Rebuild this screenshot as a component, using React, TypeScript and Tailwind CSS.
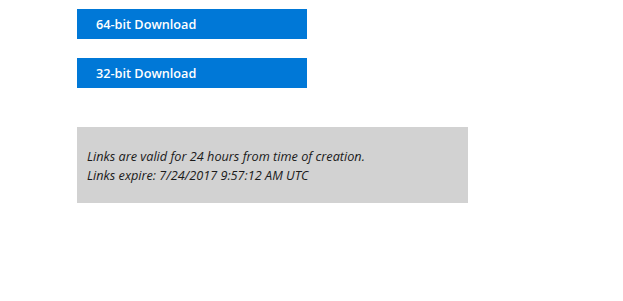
export default function App() {
  return (
    <div className="min-h-[301px] bg-white pl-[77px] pt-[9px] font-['Open_Sans',sans-serif]">
      <div className="flex flex-col gap-[19px]">
        <a className="flex h-[30px] w-[230px] items-center bg-[#0078d7] pl-[19px] pt-[2px] text-[12.7px] font-semibold text-white">
          64-bit Download
        </a>
        <a className="flex h-[30px] w-[230px] items-center bg-[#0078d7] pl-[19px] pt-[2px] text-[12.7px] font-semibold text-white">
          32-bit Download
        </a>
      </div>
      <div className="mt-[39px] w-[391px] bg-[#d2d2d2] px-[10px] pb-[18px] pt-[20px] text-[12.7px] italic leading-[19px] text-[#1a1a1a]">
        <p>Links are valid for 24 hours from time of creation.</p>
        <p>Links expire: 7/24/2017 9:57:12 AM UTC</p>
      </div>
    </div>
  );
}
